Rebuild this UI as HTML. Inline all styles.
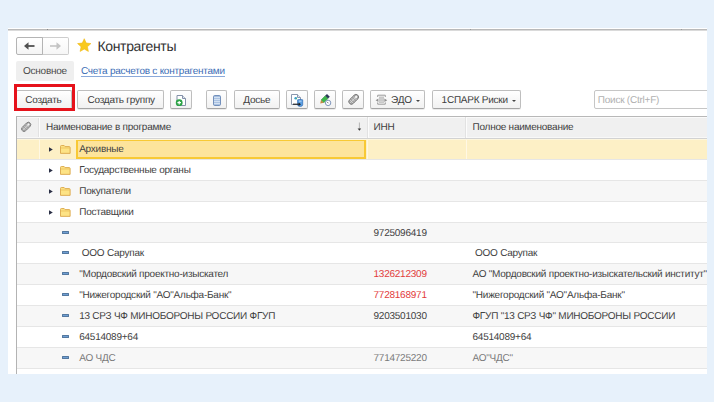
<!DOCTYPE html>
<html><head><meta charset="utf-8">
<style>
*{box-sizing:border-box;margin:0;padding:0}
html,body{width:714px;height:402px;overflow:hidden;background:#e7f1fb;font-family:"Liberation Sans",sans-serif;color:#333;text-rendering:geometricPrecision}
.a{position:absolute}
#panel{left:8px;top:28px;width:699px;height:346px;background:#fff;overflow:hidden}
#topline{left:0;top:1px;width:699px;height:2px;border-top:1px solid #b9b9b9;background:#dadada}
.t{position:absolute;white-space:nowrap;font-size:10px;letter-spacing:-0.24px;line-height:12px}
.btn{position:absolute;top:62px;height:19px;border:1px solid #bebebe;border-bottom-color:#a4a4a4;border-radius:2px;background:linear-gradient(#fff,#f1f1f1);box-shadow:0 1px 0 rgba(0,0,0,.08)}
.btn .lbl{position:absolute;top:3px;left:0;right:0;text-align:center;font-size:9.5px;line-height:12px;color:#404040;white-space:nowrap}
.row{position:absolute;left:8px;width:691px;height:21px;border-bottom:1px solid #e6e6e6}
.g{background:#f7f7f7}
.sel{background:#fdf0c6}
.cur{position:absolute;left:60px;top:0;width:290px;height:20px;background:#fde49c;border:2px solid #f8c935}
.vs{position:absolute;top:0;width:1px;height:20px;background:#fff8e4}
.tri{position:absolute;left:33px;top:7.7px;width:3.8px;height:5px}
.fold{position:absolute;left:44.2px;top:5.7px;width:10.6px;height:9px}
.dash{position:absolute;left:45.8px;top:8px;width:7px;height:3px;background:#6f9fd4;border:.7px solid #54789f;border-radius:.5px}
.c1,.c2,.c3{position:absolute;top:5.4px;font-size:10px;letter-spacing:-0.24px;line-height:12px;white-space:nowrap;color:#424242}
.c1{left:63.2px}
.c2{left:357.5px}
.c3{left:456.5px}
</style></head><body>
<div id="panel" class="a">
  <div id="topline" class="a"></div>
  <div class="a" style="left:39px;top:1px;width:1px;height:1px;background:#888"></div>
  <div class="a" style="left:462px;top:1px;width:1px;height:1px;background:#999"></div>
  <div class="a" style="left:673px;top:1px;width:1px;height:1px;background:#999"></div>
  <!-- nav -->
  <div class="a" style="left:34px;top:8.5px;width:26.5px;height:18px;border:1px solid #cdcdcd;border-left:none;border-radius:0 2px 2px 0;background:linear-gradient(#fff,#f6f6f6)"></div>
  <div class="a" style="left:7.5px;top:8.5px;width:27.5px;height:18px;border:1px solid #b4b4b4;border-radius:2px 0 0 2px;background:linear-gradient(#fff,#f4f4f4)"></div>
  <svg class="a" style="left:16px;top:14px" width="11" height="8" viewBox="0 0 11 8"><path d="M3 4H10.5" stroke="#505050" stroke-width="1.8"/><path d="M0 4L4.5 0.2V7.8Z" fill="#505050"/></svg>
  <svg class="a" style="left:41.5px;top:14px" width="11" height="8" viewBox="0 0 11 8"><path d="M0 4H8" stroke="#c4c4c4" stroke-width="1.6"/><path d="M11 4L6.5 0.3V7.7Z" fill="#c4c4c4"/></svg>
  <!-- star -->
  <svg class="a" style="left:68.8px;top:10px" width="14.5" height="14.5" viewBox="0 0 24 24"><path d="M12.00 1.20L15.23 8.35L23.03 9.22L17.23 14.50L18.82 22.18L12.00 18.30L5.18 22.18L6.77 14.50L0.97 9.22L8.77 8.35Z" fill="#f9c91c" stroke="#f0b915" stroke-width="1" stroke-linejoin="round"/></svg>
  <div class="t" style="left:89.5px;top:9.5px;font-size:14px;letter-spacing:-0.35px;line-height:16px;color:#333">Контрагенты</div>
  <!-- tabs -->
  <div class="a" style="left:8px;top:32.5px;width:57.5px;height:20px;background:#efefef;border-radius:2px"></div>
  <div class="t" style="left:15px;top:38px;color:#4a4a4a">Основное</div>
  <div class="t" style="left:73px;top:38px;color:#3c6db5">Счета расчетов с контрагентами</div><div class="a" style="left:73px;top:48px;width:144px;height:1px;background:#8aa9da"></div>
  <!-- toolbar -->
  <div class="btn" style="left:8px;width:56px"></div>
  <div class="t" style="left:17.2px;top:66.5px;color:#404040">Создать</div>
  <div class="a" style="left:5.7px;top:56.2px;width:61px;height:27.2px;border:3.4px solid #e6121b"></div>
  <div class="btn" style="left:69px;width:86.5px"></div>
  <div class="t" style="left:79.5px;top:66.5px;color:#404040">Создать группу</div>
  <div class="btn" style="left:162px;width:22px"></div>
  <svg class="a" style="left:166px;top:65.6px" width="14" height="14" viewBox="0 0 14 14">
    <path d="M3 1.5H8.5L11.5 4.5V11.5H3Z" fill="#fff" stroke="#8391a8" stroke-width="1"/>
    <path d="M8.5 1.5V4.5H11.5" fill="#dfe5ee" stroke="#8391a8" stroke-width="1"/>
    <circle cx="5.2" cy="8.7" r="3.4" fill="#2ca345"/>
    <path d="M5.2 6.9V10.5M3.4 8.7H7" stroke="#fff" stroke-width="1.2"/>
  </svg>
  <div class="btn" style="left:197.5px;width:21.5px"></div>
  <svg class="a" style="left:204.5px;top:66.5px" width="8" height="11" viewBox="0 0 8 11">
    <rect x="0.5" y="0.5" width="7" height="10" rx="1.2" fill="#a6bfe0" stroke="#7390bb" stroke-width="1"/>
    <path d="M1 2.6H7M1 4.6H7M1 6.6H7M1 8.6H7" stroke="#e2ecf8" stroke-width=".8"/>
  </svg>
  <div class="btn" style="left:226px;width:45.5px"></div>
  <div class="t" style="left:235.3px;top:66.5px;color:#404040">Досье</div>
  <div class="btn" style="left:278px;width:22px"></div>
  <svg class="a" style="left:282px;top:65px" width="14" height="14" viewBox="0 0 14 14">
    <path d="M1.5 1.5H7.5L10.5 4.5V11.5H1.5Z" fill="#fff" stroke="#8a98ae" stroke-width="1"/>
    <path d="M7.5 1.5V4.5H10.5" fill="#e4e9f0" stroke="#8a98ae" stroke-width="1"/>
    <circle cx="5.7" cy="5.2" r="1.3" fill="#3a9fd0"/><circle cx="6.4" cy="5.6" r=".6" fill="#4cc060"/>
    <path d="M7.6 6.8Q10 6 12.7 6.8V11.8Q12.7 13.4 10.1 13.4Q7.6 13.4 7.6 11.8Z" fill="#5b9fe3" stroke="#2f6cb4" stroke-width=".7"/>
    <path d="M9 8.2H11.5" stroke="#cfe4fa" stroke-width=".8"/>
    <path d="M3 11.2H9.5" stroke="#1e1e1e" stroke-width="1.1"/><path d="M8.6 9.4L11 11.2L8.6 13Z" fill="#1e1e1e"/>
  </svg>
  <div class="btn" style="left:306px;width:22px"></div>
  <svg class="a" style="left:310px;top:65px" width="14" height="14" viewBox="0 0 14 14">
    <path d="M3 7L7.2 2.8L10 5.6L5.8 9.8Z" fill="#3db54b" stroke="#2c8c38" stroke-width=".5"/>
    <path d="M7.2 2.8L9 1L11.8 3.8L10 5.6Z" fill="#2b3757"/>
    <path d="M3 7L2.2 10.6L5.8 9.8Z" fill="#c58a45"/>
    <circle cx="10.1" cy="9.9" r="2.7" fill="#fff" stroke="#7d94ba" stroke-width="1"/>
    <path d="M9.4 9.2L10.4 10.2" stroke="#444" stroke-width=".9"/>
  </svg>
  <div class="btn" style="left:334px;width:22px"></div>
  <svg class="a" style="left:338px;top:64.2px" width="15" height="15" viewBox="0 0 16 16">
    <g transform="rotate(-45 8 8)"><rect x="2" y="5.2" width="12.5" height="5.6" rx="2.8" fill="#a4a4a4" stroke="#7c7c7c" stroke-width="1"/><path d="M5 5.5V10.5M7.5 5.5V10.5M10 5.5V10.5M2.5 8H11" stroke="#dedede" stroke-width=".7"/><ellipse cx="12" cy="8" rx="1.4" ry="1.2" fill="#f4f4f4"/></g>
  </svg>
  <div class="btn" style="left:362px;width:54.5px"></div>
  <svg class="a" style="left:367px;top:66px" width="13" height="12" viewBox="0 0 13 12">
    <path d="M2.7 3V1.2H10.3V3M2.7 8.4V10.2H10.3V8.4" fill="none" stroke="#9c9c9c" stroke-width="1"/>
    <rect x="4" y="2.5" width="5" height="6.4" fill="#c4c4c4"/>
    <path d="M4.3 4.2H8.7M4.3 5.9H8.7M4.3 7.5H8.7" stroke="#dadada" stroke-width=".6"/>
    <path d="M0.6 6.2L3.4 4.4V8Z" fill="#8e8e8e"/><path d="M12.2 6.2L9.4 4.4V8Z" fill="#8e8e8e"/>
  </svg>
  <div class="t" style="left:383.1px;top:66.5px;color:#404040">ЭДО</div>
  <div class="a" style="left:408.3px;top:71.8px;width:0;height:0;border-top:2.5px solid #444;border-left:2px solid transparent;border-right:2px solid transparent"></div>
  <div class="btn" style="left:424px;width:89px"></div>
  <div class="t" style="left:433.6px;top:66.5px;color:#404040">1СПАРК Риски</div>
  <div class="a" style="left:504px;top:71.8px;width:0;height:0;border-top:2.5px solid #444;border-left:2px solid transparent;border-right:2px solid transparent"></div>
  <div class="a" style="left:586.4px;top:62px;width:130px;height:19px;border:1px solid #c6c6c6;border-radius:2px;background:#fff"></div>
  <div class="t" style="left:589.8px;top:66.5px;color:#b0b0b0">Поиск (Ctrl+F)</div>

  <!-- ROWS -->
<div class="row sel" style="top:111px;height:21px">
<div class="cur"></div><div class="vs" style="left:23px"></div><div class="vs" style="left:351px"></div><div class="vs" style="left:449.5px"></div><div style="position:absolute;left:0;top:0;width:691px;height:1px;background:#fdf6de"></div>
<svg class="tri" viewBox="0 0 4 5"><path d="M0 0L4 2.5L0 5Z" fill="#2a2f45"/></svg><svg class="fold" viewBox="0 0 11 10" preserveAspectRatio="none"><path d="M.5 9.3V1.6Q.5.6 1.5.6H4.3L5.3 1.8H9.5Q10.5 1.8 10.5 2.8V9.3Z" fill="#fde385" stroke="#dca84a" stroke-width="1"/><path d="M.8 3.3H10.2" stroke="#e8bb55" stroke-width=".8"/></svg>
<div class="c1">Архивные</div>
</div>
<div class="row" style="top:132px;height:21px">
<svg class="tri" viewBox="0 0 4 5"><path d="M0 0L4 2.5L0 5Z" fill="#2a2f45"/></svg><svg class="fold" viewBox="0 0 11 10" preserveAspectRatio="none"><path d="M.5 9.3V1.6Q.5.6 1.5.6H4.3L5.3 1.8H9.5Q10.5 1.8 10.5 2.8V9.3Z" fill="#fde385" stroke="#dca84a" stroke-width="1"/><path d="M.8 3.3H10.2" stroke="#e8bb55" stroke-width=".8"/></svg>
<div class="c1">Государственные органы</div>
</div>
<div class="row g" style="top:153px;height:21px">
<svg class="tri" viewBox="0 0 4 5"><path d="M0 0L4 2.5L0 5Z" fill="#2a2f45"/></svg><svg class="fold" viewBox="0 0 11 10" preserveAspectRatio="none"><path d="M.5 9.3V1.6Q.5.6 1.5.6H4.3L5.3 1.8H9.5Q10.5 1.8 10.5 2.8V9.3Z" fill="#fde385" stroke="#dca84a" stroke-width="1"/><path d="M.8 3.3H10.2" stroke="#e8bb55" stroke-width=".8"/></svg>
<div class="c1">Покупатели</div>
</div>
<div class="row" style="top:174px;height:21px">
<svg class="tri" viewBox="0 0 4 5"><path d="M0 0L4 2.5L0 5Z" fill="#2a2f45"/></svg><svg class="fold" viewBox="0 0 11 10" preserveAspectRatio="none"><path d="M.5 9.3V1.6Q.5.6 1.5.6H4.3L5.3 1.8H9.5Q10.5 1.8 10.5 2.8V9.3Z" fill="#fde385" stroke="#dca84a" stroke-width="1"/><path d="M.8 3.3H10.2" stroke="#e8bb55" stroke-width=".8"/></svg>
<div class="c1">Поставщики</div>
</div>
<div class="row g" style="top:195px;height:20px">
<div class="dash"></div>
<div class="c2">9725096419</div>
</div>
<div class="row" style="top:215px;height:21px">
<div class="dash"></div>
<div class="c1">&nbsp;ООО Сарупак</div>
<div class="c3">&nbsp;ООО Сарупак</div>
</div>
<div class="row g" style="top:236px;height:21px">
<div class="dash"></div>
<div class="c1">"Мордовский проектно-изыскател</div>
<div class="c2" style="color:#e23b3b">1326212309</div>
<div class="c3">АО "Мордовский проектно-изыскательский институт"</div>
</div>
<div class="row" style="top:257px;height:21px">
<div class="dash"></div>
<div class="c1">"Нижегородский "АО"Альфа-Банк"</div>
<div class="c2" style="color:#e23b3b">7728168971</div>
<div class="c3">"Нижегородский "АО"Альфа-Банк"</div>
</div>
<div class="row g" style="top:278px;height:21px">
<div class="dash"></div>
<div class="c1">13 СРЗ ЧФ МИНОБОРОНЫ РОССИИ ФГУП</div>
<div class="c2">9203501030</div>
<div class="c3">ФГУП "13 СРЗ ЧФ" МИНОБОРОНЫ РОССИИ</div>
</div>
<div class="row" style="top:299px;height:21px">
<div class="dash"></div>
<div class="c1">64514089+64</div>
<div class="c3">64514089+64</div>
</div>
<div class="row g" style="top:320px;height:21px">
<div class="dash"></div>
<div class="c1" style="color:#7a7a7a">АО ЧДС</div>
<div class="c2" style="color:#7a7a7a">7714725220</div>
<div class="c3" style="color:#7a7a7a">АО"ЧДС"</div>
</div>
<div class="row" style="top:341px;height:21px">
<div class="dash"></div>
</div>
<!-- /ROWS -->
  <!-- table header -->
  <div class="a" style="left:7.5px;top:88px;width:692px;height:23px;background:#f0f0f0;border-top:1px solid #b8b8b8;border-bottom:1px solid #d2d2d2"></div>
  <div class="a" style="left:7.5px;top:88px;width:1.5px;height:258px;background:#b3b3b3"></div>
  <div class="a" style="left:30px;top:89px;width:1px;height:21px;background:#e2e2e2"></div><div class="a" style="left:31px;top:89px;width:1px;height:21px;background:#fcfcfc"></div><div class="a" style="left:9px;top:89px;width:690px;height:1px;background:#fafafa"></div><div class="a" style="left:9px;top:109px;width:690px;height:1px;background:#f8f8f8"></div>
  <div class="a" style="left:358.5px;top:89px;width:1px;height:21px;background:#e2e2e2"></div><div class="a" style="left:359.5px;top:89px;width:1px;height:21px;background:#fcfcfc"></div>
  <div class="a" style="left:456.5px;top:89px;width:1px;height:21px;background:#e2e2e2"></div><div class="a" style="left:457.5px;top:89px;width:1px;height:21px;background:#fcfcfc"></div>
  <svg class="a" style="left:10.5px;top:91.6px" width="14" height="14" viewBox="0 0 16 16">
    <g transform="rotate(-45 8 8)"><rect x="2" y="5.2" width="12.5" height="5.6" rx="2.8" fill="#a4a4a4" stroke="#7c7c7c" stroke-width="1"/><path d="M5 5.5V10.5M7.5 5.5V10.5M10 5.5V10.5M2.5 8H11" stroke="#dedede" stroke-width=".7"/><ellipse cx="12" cy="8" rx="1.4" ry="1.2" fill="#f4f4f4"/></g>
  </svg>
  <div class="t" style="left:38px;top:94px;color:#404040">Наименование в программе</div>
  <svg class="a" style="left:348px;top:94px" width="7" height="10" viewBox="0 0 7 10"><path d="M3.4 0.5V7" stroke="#b4b4b4" stroke-width="1"/><path d="M1.6 6.6H5.2L3.4 8.8Z" fill="#3a3a3a"/></svg>
  <div class="t" style="left:365.5px;top:94px;color:#404040">ИНН</div>
  <div class="t" style="left:464.5px;top:94px;color:#404040">Полное наименование</div>
</div>
</body></html>
